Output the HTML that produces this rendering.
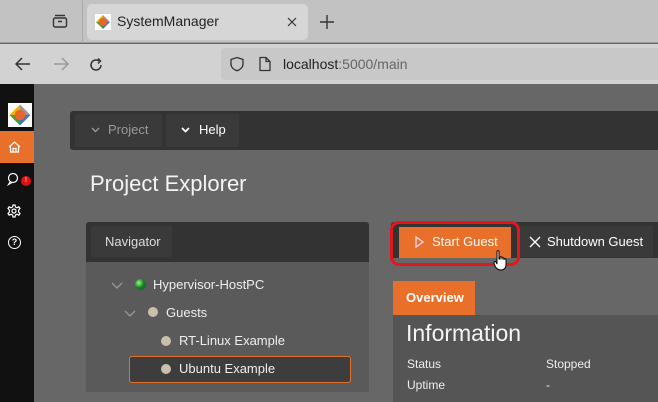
<!DOCTYPE html>
<html><head><style>
*{margin:0;padding:0;box-sizing:border-box}
body{width:658px;height:402px;overflow:hidden;background:#676767;font-family:"Liberation Sans",sans-serif;position:relative}
.a{position:absolute}
.t{color:#eee;font-size:13px;white-space:nowrap}
</style></head><body>
<div class="a" style="left:0;top:0;width:658px;height:43px;background:#c2c2c2;border-bottom:1px solid #9a9a9a"></div>
<div class="a" style="left:82px;top:0;width:1px;height:43px;background:#aaa"></div>
<svg class="a" style="left:52px;top:13px" width="16" height="16" viewBox="0 0 16 16" fill="none" stroke="#333" stroke-width="1.4"><rect x="1.5" y="5" width="13" height="9" rx="1.5"/><path d="M3 2.5h10M6 8.5h4"/></svg>
<div class="a" style="left:87px;top:4px;width:221px;height:36px;background:#d6d6d6;border-radius:5px"></div>
<svg class="a" style="left:95px;top:14px" width="16" height="16" viewBox="0 0 16 16"><rect width="16" height="16" fill="#fff"/><path d="M8 1L8 8L1 8Z" fill="#f0b400"/><path d="M8 1L15 8L8 8Z" fill="#999"/><path d="M1 8L8 8L8 15Z" fill="#4a9a3a"/><path d="M8 8L15 8L8 15Z" fill="#3a78c8"/><circle cx="8" cy="8" r="4" fill="#e8662a"/></svg>
<div class="a" style="left:117px;top:13px;font-size:14px;color:#222">SystemManager</div>
<svg class="a" style="left:287px;top:17px" width="10" height="10" viewBox="0 0 10 10" stroke="#333" stroke-width="1.2"><path d="M1 1L9 9M9 1L1 9"/></svg>
<svg class="a" style="left:320px;top:15px" width="14" height="14" viewBox="0 0 14 14" stroke="#333" stroke-width="1.4"><path d="M7 0V14M0 7H14"/></svg>
<div class="a" style="left:0;top:44px;width:658px;height:40px;background:#d2d2d2"></div>
<svg class="a" style="left:15px;top:57px" width="16" height="14" viewBox="0 0 16 14" fill="none" stroke="#333" stroke-width="1.5"><path d="M15 7H1M7 1L1 7L7 13"/></svg>
<svg class="a" style="left:53px;top:57px" width="16" height="14" viewBox="0 0 16 14" fill="none" stroke="#999" stroke-width="1.5"><path d="M1 7H15M9 1L15 7L9 13"/></svg>
<svg class="a" style="left:88px;top:57px" width="16" height="16" viewBox="0 0 16 16" fill="none" stroke="#333" stroke-width="1.5"><path d="M13 8A5 5 0 1 1 11 4"/><path d="M10 1.5L12.5 4L10 6.5" /></svg>
<div class="a" style="left:221px;top:48px;width:437px;height:32px;background:#c8c8c8;border-radius:4px 0 0 4px"></div>
<svg class="a" style="left:229px;top:56px" width="16" height="16" viewBox="0 0 16 16" fill="none" stroke="#333" stroke-width="1.3"><path d="M8 1.5L14 3.5V8C14 11.5 11 13.8 8 14.8C5 13.8 2 11.5 2 8V3.5Z"/></svg>
<svg class="a" style="left:258px;top:56px" width="14" height="16" viewBox="0 0 14 16" fill="none" stroke="#333" stroke-width="1.3"><path d="M2 1.5H8L12 5.5V14.5H2Z M8 1.5V5.5H12"/></svg>
<div class="a" style="left:283px;top:56px;font-size:14px;color:#222">localhost<span style="color:#666">:5000/main</span></div>
<div class="a" style="left:0;top:84px;width:34px;height:318px;background:#111"></div>
<svg class="a" style="left:8px;top:103px" width="24" height="24" viewBox="0 0 16 16"><rect width="16" height="16" fill="#fff"/><path d="M8 1L8 8L1 8Z" fill="#f0b400"/><path d="M8 1L15 8L8 8Z" fill="#999"/><path d="M1 8L8 8L8 15Z" fill="#4a9a3a"/><path d="M8 8L15 8L8 15Z" fill="#3a78c8"/><circle cx="8" cy="8" r="3.5" fill="#e8662a"/></svg>
<div class="a" style="left:0;top:131px;width:34px;height:32px;background:#e8702a"></div>
<svg class="a" style="left:8px;top:141px" width="13" height="12" viewBox="0 0 13 12" fill="none" stroke="#fff" stroke-width="1.2"><path d="M1 6L6.5 1L12 6M2.5 5V11H10.5V5M5 11V7.5H8V11"/></svg>
<svg class="a" style="left:7px;top:172px" width="14" height="14" viewBox="0 0 14 14" fill="none" stroke="#fff" stroke-width="1.2"><circle cx="6" cy="6" r="4.5"/><path d="M3 10L1.5 12.5L5 10.5"/></svg>
<div class="a" style="left:21px;top:176px;width:10px;height:10px;border-radius:50%;background:#e01010;color:#fff;font-size:7px;text-align:center;line-height:10px">!</div>
<svg class="a" style="left:7px;top:204px" width="14" height="14" viewBox="0 0 14 14" fill="none" stroke="#fff" stroke-width="1.2"><circle cx="7" cy="7" r="2"/><path d="M6 1H8L8.5 3 10 3.8 11.8 2.8 13 4.5 11.6 6 11.6 8 13 9.5 11.8 11.2 10 10.2 8.5 11 8 13H6L5.5 11 4 10.2 2.2 11.2 1 9.5 2.4 8 2.4 6 1 4.5 2.2 2.8 4 3.8 5.5 3Z"/></svg>
<div class="a" style="left:8px;top:236px;width:13px;height:13px;border:1.3px solid #fff;border-radius:50%;color:#fff;font-size:9px;text-align:center;line-height:11px;font-weight:bold">?</div>
<div class="a" style="left:70px;top:111px;width:588px;height:39px;background:#333;border-radius:3px 0 0 3px"></div>
<div class="a" style="left:75px;top:114px;width:87px;height:33px;background:#3a3a3a;border-radius:2px"></div>
<svg class="a" style="left:91px;top:127px" width="9" height="6" viewBox="0 0 9 6" fill="none" stroke="#999" stroke-width="1.4"><path d="M1 1L4.5 4.5L8 1"/></svg>
<div class="a t" style="left:108px;top:122px;color:#999">Project</div>
<div class="a" style="left:166px;top:114px;width:73px;height:33px;background:#3a3a3a;border-radius:2px"></div>
<svg class="a" style="left:181px;top:127px" width="9" height="6" viewBox="0 0 9 6" fill="none" stroke="#fff" stroke-width="1.8"><path d="M1 1L4.5 4.5L8 1"/></svg>
<div class="a t" style="left:199px;top:122px;color:#fff">Help</div>
<div class="a" style="left:90px;top:171px;font-size:22px;color:#f4f4f4">Project Explorer</div>
<div class="a" style="left:86px;top:222px;width:283px;height:40px;background:#333;border-radius:3px 3px 0 0"></div>
<div class="a" style="left:91px;top:226px;width:81px;height:31px;background:#3a3a3a;border-radius:2px"></div>
<div class="a t" style="left:105px;top:234px;color:#ddd">Navigator</div>
<div class="a" style="left:86px;top:262px;width:283px;height:130px;background:#5a5a5a"></div>
<svg class="a" style="left:111px;top:282px" width="12" height="7" viewBox="0 0 12 7" fill="none" stroke="#999" stroke-width="1.3"><path d="M1 1L6 6L11 1"/></svg>
<div class="a" style="left:135px;top:279px;width:11px;height:11px;border-radius:50%;background:radial-gradient(circle at 35% 35%,#8f8,#1a7a1a 50%,#063 100%)"></div>
<div class="a t" style="left:153px;top:277px">Hypervisor-HostPC</div>
<svg class="a" style="left:124px;top:310px" width="12" height="7" viewBox="0 0 12 7" fill="none" stroke="#999" stroke-width="1.3"><path d="M1 1L6 6L11 1"/></svg>
<div class="a" style="left:148px;top:307px;width:10px;height:10px;border-radius:50%;background:#c9c0aa"></div>
<div class="a t" style="left:166px;top:305px">Guests</div>
<div class="a" style="left:161px;top:336px;width:10px;height:10px;border-radius:50%;background:#c9c0aa"></div>
<div class="a t" style="left:179px;top:333px">RT-Linux Example</div>
<div class="a" style="left:129px;top:356px;width:222px;height:27px;background:#3d3d3d;border:1px solid #e0702a;border-radius:3px"></div>
<div class="a" style="left:161px;top:364px;width:10px;height:10px;border-radius:50%;background:#c9c0aa"></div>
<div class="a t" style="left:179px;top:361px">Ubuntu Example</div>
<div class="a" style="left:391px;top:222px;width:267px;height:36px;background:#333;border-radius:3px 0 0 3px"></div>
<div class="a" style="left:520px;top:226px;width:133px;height:31px;background:#3a3a3a"></div>
<div class="a" style="left:399px;top:227px;width:112px;height:31px;background:#e8702a"></div>
<div class="a" style="left:390px;top:221px;width:130px;height:45px;border:3px solid #e8141c;border-radius:9px"></div>
<svg class="a" style="left:415px;top:236px" width="9" height="12" viewBox="0 0 9 12" fill="none" stroke="#fde" stroke-width="1.3"><path d="M1 1L8 6L1 11Z"/></svg>
<div class="a t" style="left:432px;top:234px;color:#fff">Start Guest</div>
<svg class="a" style="left:529px;top:236px" width="12" height="12" viewBox="0 0 12 12" stroke="#fff" stroke-width="1.3"><path d="M1 1L11 11M11 1L1 11"/></svg>
<div class="a t" style="left:547px;top:234px;color:#fff">Shutdown Guest</div>
<svg class="a" style="left:493px;top:250px" width="16" height="22" viewBox="0 0 16 22"><path d="M4 1.5C4 .5 6 .5 6 1.5V9L7 9V7.5C7 6.5 9 6.5 9 7.5V9.5V8.5C9 7.5 11 7.5 11 8.5V10V9.5C11 8.5 13 8.5 13 9.5V15C13 18 11 20 8 20C5 20 3 18 2 16L1 13C.5 12 2 11 3 12L4 14Z" fill="#fff" stroke="#000" stroke-width="1"/></svg>
<div class="a" style="left:393px;top:281px;width:82px;height:35px;background:#e8702a"></div>
<div class="a" style="left:406px;top:290px;font-size:13px;font-weight:bold;color:#fff">Overview</div>
<div class="a" style="left:393px;top:315px;width:265px;height:87px;background:#555"></div>
<div class="a" style="left:406px;top:320px;font-size:23px;color:#f4f4f4">Information</div>
<div class="a" style="left:407px;top:357px;font-size:12px;color:#eee">Status</div>
<div class="a" style="left:546px;top:357px;font-size:12px;color:#eee">Stopped</div>
<div class="a" style="left:407px;top:378px;font-size:12px;color:#eee">Uptime</div>
<div class="a" style="left:546px;top:378px;font-size:12px;color:#eee">-</div>
</body></html>
